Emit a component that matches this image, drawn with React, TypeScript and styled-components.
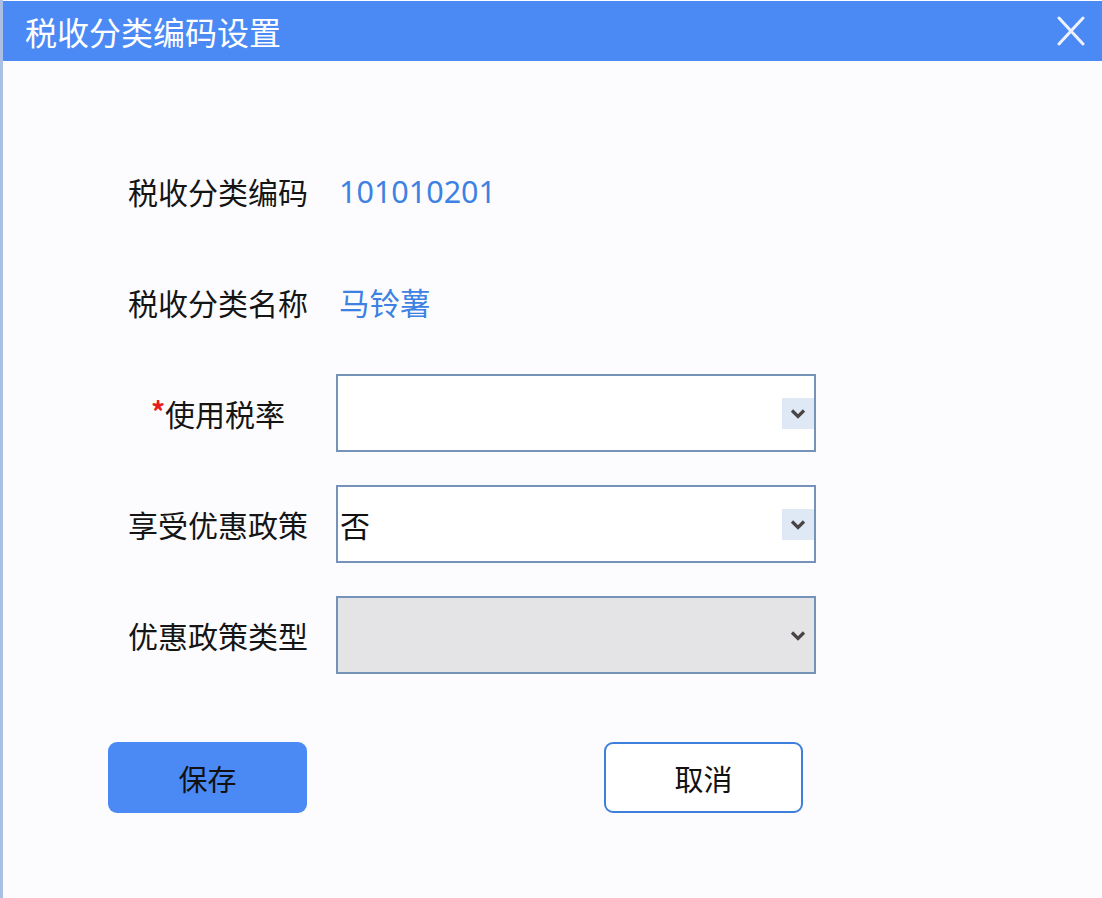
import React from "react";
import styled, { createGlobalStyle } from "styled-components";

const GlobalStyle = createGlobalStyle`
  html, body {
    margin: 0;
    padding: 0;
    background: #fcfcfe;
  }
  body {
    font-family: "Noto Sans CJK SC", "Noto Sans", sans-serif;
  }
`;

type Field = {
  label: string;
  required?: boolean;
  kind: "text" | "select";
  value?: string;
  disabled?: boolean;
};

const fields: Field[] = [
  { label: "税收分类编码", kind: "text", value: "101010201" },
  { label: "税收分类名称", kind: "text", value: "马铃薯" },
  { label: "使用税率", kind: "select", required: true, value: "" },
  { label: "享受优惠政策", kind: "select", value: "否" },
  { label: "优惠政策类型", kind: "select", value: "", disabled: true },
];

export default function App() {
  return (
    <>
      <GlobalStyle />
      <Dialog>
        <TitleBar>
          <Title>税收分类编码设置</Title>
          <CloseButton aria-label="关闭">
            <svg width="28" height="30" viewBox="0 0 28 30">
              <path
                d="M2 2 L26 28 M26 2 L2 28"
                stroke="#eef2fd"
                strokeWidth="3"
                strokeLinecap="round"
                fill="none"
              />
            </svg>
          </CloseButton>
        </TitleBar>

        <Body>
          <Form>
            {fields.map((f) => (
              <Row key={f.label}>
                <Label>
                  {f.required && <Star>*</Star>}
                  {f.label}
                </Label>
                {f.kind === "text" ? (
                  <Value>{f.value}</Value>
                ) : (
                  <SelectBox $disabled={f.disabled}>
                    <SelectText>{f.value}</SelectText>
                    <ArrowBox $disabled={f.disabled}>
                      <svg width="16" height="11" viewBox="0 0 16 11">
                        <path
                          d="M2 2.5 L8 8.5 L14 2.5"
                          stroke="#4a4444"
                          strokeWidth="3.2"
                          fill="none"
                        />
                      </svg>
                    </ArrowBox>
                  </SelectBox>
                )}
              </Row>
            ))}
          </Form>

          <ButtonRow>
            <Button $primary>保存</Button>
            <Button>取消</Button>
          </ButtonRow>
        </Body>
      </Dialog>
    </>
  );
}

const Dialog = styled.div`
  width: 1102px;
  height: 898px;
  box-sizing: border-box;
  border-left: 3px solid #a9bfe6;
  padding-top: 1px;
  background: #fcfcfe;
  overflow: hidden;
`;

const TitleBar = styled.div`
  height: 60px;
  background: #4b8af4;
  display: flex;
  align-items: center;
  justify-content: space-between;
  padding: 0 17px 0 22px;
`;

const Title = styled.h1`
  margin: 0;
  font-size: 32px;
  font-weight: 400;
  color: #ffffff;
  letter-spacing: 0;
`;

const CloseButton = styled.button`
  border: none;
  background: transparent;
  padding: 0;
  display: flex;
  cursor: pointer;
`;

const Body = styled.div`
  padding-top: 91px;
`;

const Form = styled.div`
  display: flex;
  flex-direction: column;
  gap: 33px;
`;

const Row = styled.div`
  display: grid;
  grid-template-columns: 236px 480px;
  align-items: center;
  height: 78px;
  padding-left: 97px;
`;

const Label = styled.div`
  text-align: center;
  font-size: 30px;
  color: #151515;
  white-space: nowrap;
`;

const Star = styled.span`
  color: #e61c1c;
  font-weight: 700;
  font-size: 28px;
  position: relative;
  top: -3px;
`;

const Value = styled.div`
  font-size: 30.5px;
  color: #3d82e2;
  padding-left: 3px;
  font-family: "Noto Sans", "Noto Sans CJK SC", sans-serif;
`;

const SelectBox = styled.div<{ $disabled?: boolean }>`
  height: 78px;
  box-sizing: border-box;
  border: 2px solid #7592b9;
  background: ${(p) => (p.$disabled ? "#e4e4e6" : "#ffffff")};
  display: flex;
  align-items: center;
  justify-content: space-between;
  padding: 0 0 0 2px;
`;

const SelectText = styled.span`
  font-size: 30px;
  color: #111111;
`;

const ArrowBox = styled.div<{ $disabled?: boolean }>`
  width: 32px;
  height: 31px;
  background: ${(p) => (p.$disabled ? "transparent" : "#dfe9f6")};
  display: flex;
  align-items: center;
  justify-content: center;
`;

const ButtonRow = styled.div`
  display: flex;
  justify-content: space-between;
  width: 695px;
  margin: 68px 0 0 105px;
`;

const Button = styled.button<{ $primary?: boolean }>`
  width: 199px;
  height: 71px;
  border-radius: 9px;
  font-family: "Noto Sans CJK SC", sans-serif;
  font-size: 29px;
  color: #111111;
  cursor: pointer;
  background: ${(p) => (p.$primary ? "#4b8af4" : "#ffffff")};
  border: ${(p) => (p.$primary ? "none" : "2px solid #3f7fdc")};
`;
